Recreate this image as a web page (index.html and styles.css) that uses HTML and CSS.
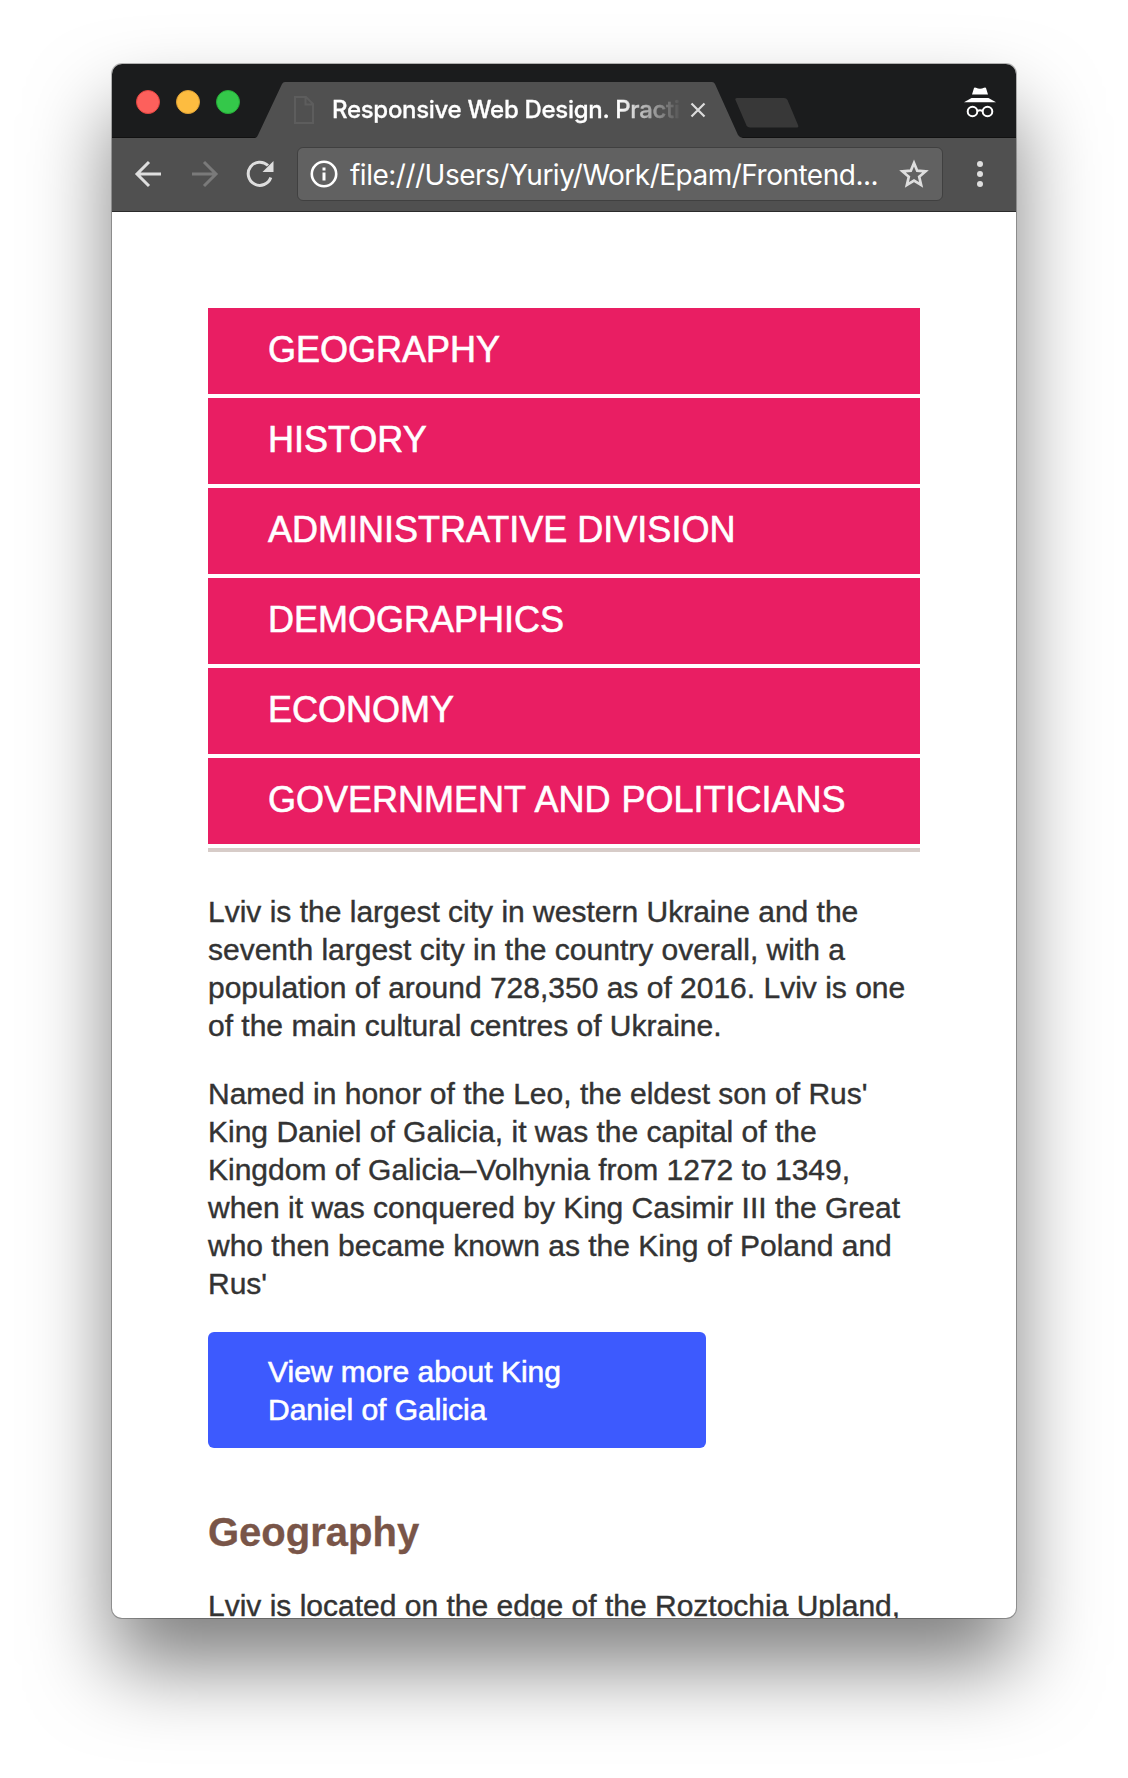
FILE: index.html
```html
<!DOCTYPE html>
<html lang="en">
<head>
<meta charset="utf-8">
<title>Responsive Web Design. Practice</title>
<link rel="stylesheet" href="styles.css">
</head>
<body>
<div class="window">
  <header class="frame">
    <div class="lights">
      <span class="light light-close"></span>
      <span class="light light-min"></span>
      <span class="light light-max"></span>
    </div>
    <div class="tab">
      <svg class="tab-file" width="20" height="28" viewBox="0 0 20 28" fill="none" stroke="#5d5d5d" stroke-width="2"><path d="M1 1H12L19 8V27H1ZM11.500 1V8.500H19"/></svg>
      <span class="tab-title">Responsive Web Design. Practi</span>
      <svg class="tab-close" width="16" height="16" viewBox="0 0 16 16" stroke="#dcdcdc" stroke-width="2.200"><path d="M1.500 1.500L14.500 14.500M14.500 1.500L1.500 14.500"/></svg>
    </div>
    <svg class="new-tab" width="64" height="30" viewBox="0 0 64 30"><path d="M2 0H49Q51.500 0 52.500 2L63 27Q64 29.500 62 29.500H15Q12.500 29.500 11.500 27.500L.5 2Q-.2 0 2 0Z" fill="#383838"/></svg>
    <svg class="incognito" width="32" height="32" viewBox="0 0 32 32"><path d="M10 1Q10.500 0 12 .8Q16 2.600 20 .8Q21.500 0 22 1L24 7.500H8Z" fill="#fff"/><path d="M7.500 11H24.500L32 15.200H0Z" fill="#fff"/><g fill="none" stroke="#fff" stroke-width="2"><circle cx="8.500" cy="24.500" r="4.800"/><circle cx="23.500" cy="24.500" r="4.800"/><path d="M13.300 24Q16 22.600 18.700 24"/></g></svg>
  </header>
  <div class="toolbar">
    <svg width="28" height="28" viewBox="0 0 28 28" fill="none" stroke="#dedede" stroke-width="3"><path d="M27 14H3M15 2L3 14L15 26"/></svg>
    <svg class="forward" width="28" height="28" viewBox="0 0 28 28" fill="none" stroke="#7a7a7a" stroke-width="3"><path d="M1 14H25M13 2L25 14L13 26"/></svg>
    <svg class="reload" width="28" height="28" viewBox="0 0 28 28"><path d="M22 5.500A11.600 11.600 0 1 0 24.800 17.500" fill="none" stroke="#dedede" stroke-width="3"/><path d="M27.500 1V12H16.500Z" fill="#dedede"/></svg>
    <div class="address">
      <svg width="28" height="28" viewBox="0 0 28 28" fill="#fff"><circle cx="14" cy="14" r="12.200" fill="none" stroke="#fff" stroke-width="2.600"/><path d="M12.500 7.500H15.500V10.500H12.500ZM12.500 12.500H15.500V20.500H12.500Z"/></svg>
      <span class="url">file:///Users/Yuriy/Work/Epam/Frontend...</span>
      <svg class="star" width="30" height="30" viewBox="0 0 30 30" fill="none" stroke="#dedede" stroke-width="2.700"><path d="M15 4L18.200 11.700L26.500 12.400L20.200 17.800L22.100 25.900L15 21.600L7.900 25.900L9.800 17.800L3.500 12.400L11.800 11.700Z"/></svg>
    </div>
    <svg class="dots" width="6" height="26" viewBox="0 0 6 26" fill="#dedede"><circle cx="3" cy="3" r="3"/><circle cx="3" cy="13" r="3"/><circle cx="3" cy="23" r="3"/></svg>
  </div>
  <main class="page">
    <nav class="menu">
      <a class="menu-item">GEOGRAPHY</a>
      <a class="menu-item">HISTORY</a>
      <a class="menu-item">ADMINISTRATIVE DIVISION</a>
      <a class="menu-item">DEMOGRAPHICS</a>
      <a class="menu-item">ECONOMY</a>
      <a class="menu-item menu-item-last">GOVERNMENT AND POLITICIANS</a>
    </nav>
    <p class="text">Lviv is the largest city in western Ukraine and the<br>seventh largest city in the country overall, with a<br>population of around 728,350 as of 2016. Lviv is one<br>of the main cultural centres of Ukraine.</p>
    <p class="text text-lead">Named in honor of the Leo, the eldest son of Rus'<br>King Daniel of Galicia, it was the capital of the<br>Kingdom of Galicia–Volhynia from 1272 to 1349,<br>when it was conquered by King Casimir III the Great<br>who then became known as the King of Poland and<br>Rus'</p>
    <a class="button">View more about King<br>Daniel of Galicia</a>
    <h2 class="heading">Geography</h2>
    <p class="text">Lviv is located on the edge of the Roztochia Upland,</p>
  </main>
</div>
</body>
</html>
```

FILE: styles.css
```css
* {
  box-sizing: border-box;
}

body {
  margin: 0;
  padding: 64px 112px 0;
  height: 1778px;
  overflow: hidden;
  background: #fff;
  font-family: "Liberation Sans", Arial, sans-serif;
}

.window {
  display: flex;
  flex-direction: column;
  height: 1554px;
  border-radius: 10px;
  overflow: hidden;
  background: #fff;
  box-shadow: 0 0 0 1px rgba(0, 0, 0, 0.27), 0 48px 82px rgba(0, 0, 0, 0.5);
}

svg {
  display: block;
  flex: none;
}

.frame {
  display: flex;
  align-items: flex-start;
  height: 74px;
  background: #1b1c1d;
  box-shadow: inset 0 -1px #111;
}

.lights {
  display: flex;
  gap: 16px;
  padding: 26px 0 0 24px;
}

.light {
  width: 24px;
  height: 24px;
  border-radius: 50%;
}

.light-close {
  background: #fd605c;
  border: 1px solid #e2443f;
}

.light-min {
  background: #fdbc40;
  border: 1px solid #dea034;
}

.light-max {
  background: #34c84a;
  border: 1px solid #25ab36;
}

.tab {
  display: flex;
  align-items: flex-start;
  width: 488px;
  height: 56px;
  margin: 18px 0 0 15px;
  background: #505050;
  clip-path: path("M0 56 Q2 56 3 53 L27 2 Q28 0 30 0 H457 Q459 0 460 2 L483 53 Q485 56 488 56 Z");
}

.tab-file {
  margin: 14px 0 0 39px;
}

.tab-title {
  width: 350px;
  margin: 12px 0 0 18px;
  overflow: hidden;
  white-space: nowrap;
  font: 500 24px/32px Inter, sans-serif;
  letter-spacing: -0.3px;
  color: #fff;
  -webkit-text-stroke: 0.3px #fff;
  -webkit-mask-image: linear-gradient(to right, #000 286px, transparent 350px);
  mask-image: linear-gradient(to right, #000 286px, transparent 350px);
}

.tab-close {
  margin: 20px 0 0 8px;
}

.new-tab {
  margin: 34px 0 0 -8px;
}

.incognito {
  margin: 23px 20px 0 auto;
}

.toolbar {
  display: flex;
  align-items: center;
  height: 74px;
  flex: none;
  padding: 0 0 2px 22px;
  background: #505050;
  box-shadow: inset 0 -1px #2b2b2b;
}

.forward {
  margin-left: 29px;
}

.reload {
  margin-left: 27px;
}

.address {
  display: flex;
  align-items: center;
  width: 646px;
  height: 54px;
  margin-left: 23px;
  padding: 0 13px 0 12px;
  border: 1px solid #404040;
  border-radius: 6px;
  background: #616161;
}

.url {
  flex: 1;
  margin-left: 12px;
  padding-top: 2px;
  white-space: nowrap;
  font: 400 28px/34px Inter, sans-serif;
  letter-spacing: -0.5px;
  color: #fff;
}

.dots {
  margin-left: 34px;
}

.page {
  flex: 1;
  min-height: 0;
  overflow: hidden;
  padding: 96px 96px 0;
}

.menu {
  display: flex;
  flex-direction: column;
  gap: 4px;
  margin-bottom: 41px;
  padding-bottom: 4px;
  border-bottom: 4px solid #d7ccc8;
}

.menu-item {
  height: 86px;
  padding: 20px 60px 0;
  background: #e91e63;
  color: #fff;
  font-size: 36px;
  line-height: 44px;
  white-space: nowrap;
  -webkit-text-stroke: 0.6px #fff;
}

.menu-item-last {
  word-spacing: 1px;
}

.text {
  margin: 0 0 30px;
  color: #333;
  font-size: 30px;
  line-height: 38px;
  white-space: nowrap;
  -webkit-text-stroke: 0.4px #333;
}

.text-lead {
  margin-bottom: 29px;
}

.button {
  display: block;
  width: 70%;
  height: 116px;
  padding: 21px 60px 0;
  border-radius: 6px;
  background: #3d5afe;
  color: #fff;
  font-size: 30px;
  line-height: 38px;
  white-space: nowrap;
  -webkit-text-stroke: 0.6px #fff;
}

.heading {
  margin: 58px 0 29px;
  color: #795548;
  font-size: 40px;
  line-height: 52px;
  -webkit-text-stroke: 0.3px #795548;
}
```
